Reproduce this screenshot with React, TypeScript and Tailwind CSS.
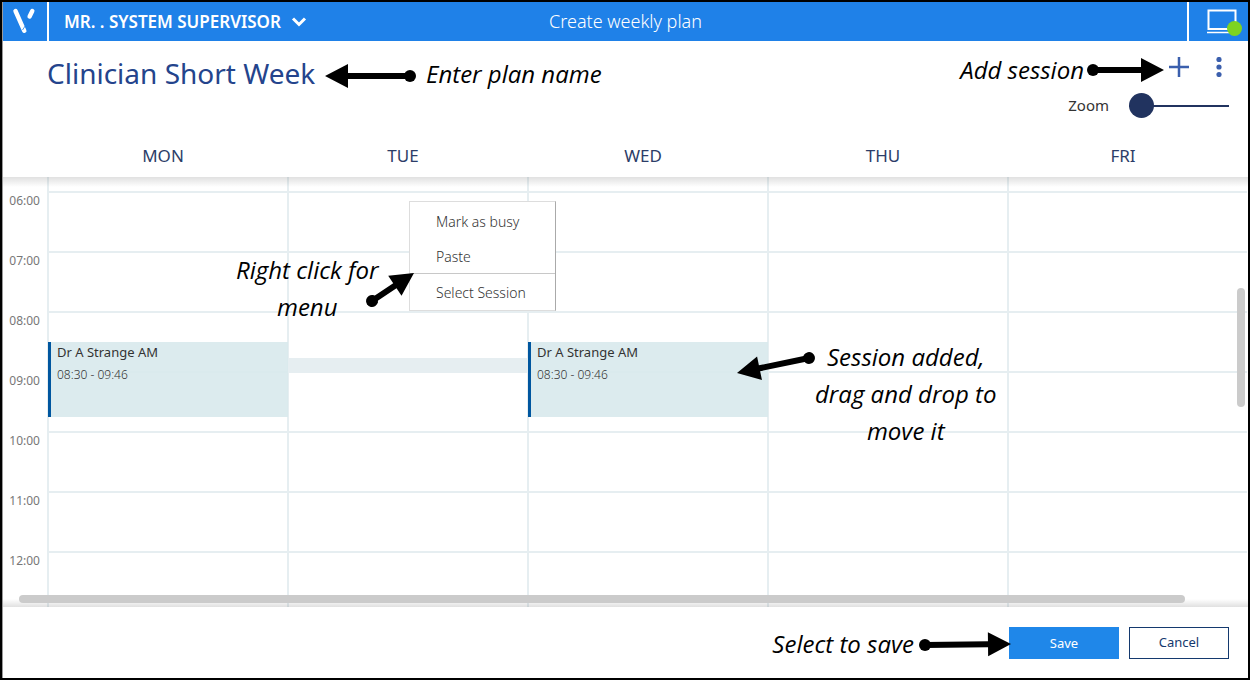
import type { ReactNode } from 'react'

const SANS = "font-['Noto_Sans','Open_Sans',sans-serif]"

const DAYS = ['MON', 'TUE', 'WED', 'THU', 'FRI']
const HOURS = ['06:00', '07:00', '08:00', '09:00', '10:00', '11:00', '12:00']

const FIRST_HOUR = 6
const GRID_OFFSET = 15

interface Session {
  day: string
  name: string
  start: string
  end: string
}

const SESSIONS: Session[] = [
  { day: 'MON', name: 'Dr A Strange AM', start: '08:30', end: '09:46' },
  { day: 'WED', name: 'Dr A Strange AM', start: '08:30', end: '09:46' }
]

// one minute is one pixel at the lowest zoom level
function toOffset(time: string) {
  const [h, m] = time.split(':').map(Number)
  return (h - FIRST_HOUR) * 60 + m + GRID_OFFSET
}

function LogoMark() {
  return (
    <svg viewBox="0 0 44 39" className="h-[39px] w-11" aria-hidden="true">
      <g stroke="#fff" strokeWidth="4.4" strokeLinecap="round">
        <path d="M12.5 9 21.3 28.8" />
        <path d="M29.3 9 26.6 14.5" />
      </g>
      <path d="M19.5 28 22.5 23.5" stroke="#1f81e8" strokeWidth="0.8" />
    </svg>
  )
}

function TopBar() {
  return (
    <header className="flex h-[39px] shrink-0 items-stretch bg-[#1f81e8] text-white">
      <div className="w-11 shrink-0">
        <LogoMark />
      </div>
      <div className="flex flex-1 items-center border-x-2 border-white">
        <div className="flex flex-1 pl-[15px]">
          <button type="button" className="flex items-center gap-2.5 text-[17px] font-semibold whitespace-nowrap">
            MR. . SYSTEM SUPERVISOR
            <svg viewBox="0 0 16 10" className="h-2.5 w-4" fill="none" aria-hidden="true">
              <path d="M2 1.5 8 7.5 14 1.5" stroke="#fff" strokeWidth="3" />
            </svg>
          </button>
        </div>
        <h1 className="text-[18px] font-light whitespace-nowrap">Create weekly plan</h1>
        <div className="flex-1" />
      </div>
      <button type="button" aria-label="Connection status" className="w-[59px] shrink-0">
        <svg viewBox="0 0 59 39" className="h-[39px] w-[59px]" fill="none" aria-hidden="true">
          <path d="M19.5 8.5h27v18.5h-27z" stroke="#fff" strokeWidth="2" />
          <path d="M18 30.5h30" stroke="#fff" strokeWidth="1.5" />
          <circle cx="45.5" cy="26.5" r="7.5" fill="#7ed321" />
        </svg>
      </button>
    </header>
  )
}

function PlanToolbar() {
  return (
    <div className="flex h-[90px] shrink-0 items-start justify-between pr-[19px] pl-11">
      <input
        type="text"
        aria-label="Plan name"
        defaultValue="Clinician Short Week"
        className="mt-3 h-10 w-[280px] bg-transparent text-[28px] text-[#24448c] outline-none"
      />
      <div className="flex flex-col items-end">
        <div className="mt-4 flex items-center gap-5">
          <button type="button" aria-label="Add session">
            <svg viewBox="0 0 20 20" className="size-5" aria-hidden="true">
              <path d="M10 0v20M0 10h20" stroke="#3b5fad" strokeWidth="2.5" />
            </svg>
          </button>
          <button type="button" aria-label="More options">
            <svg viewBox="0 0 20 20" className="size-5" fill="#3b5fad" aria-hidden="true">
              <circle cx="10" cy="2.5" r="2.6" />
              <circle cx="10" cy="10" r="2.6" />
              <circle cx="10" cy="17.5" r="2.6" />
            </svg>
          </button>
        </div>
        <div className="mt-4 flex items-center gap-5">
          <label htmlFor="zoom" className="text-[15px] text-[#333]">
            Zoom
          </label>
          <input
            id="zoom"
            type="range"
            min={0}
            max={10}
            defaultValue={0}
            className="h-[25px] w-[100px] appearance-none bg-transparent [&::-webkit-slider-runnable-track]:h-0.5 [&::-webkit-slider-runnable-track]:bg-[#21335f] [&::-webkit-slider-thumb]:-mt-3 [&::-webkit-slider-thumb]:size-[25px] [&::-webkit-slider-thumb]:appearance-none [&::-webkit-slider-thumb]:rounded-full [&::-webkit-slider-thumb]:bg-[#21335f]"
          />
        </div>
      </div>
    </div>
  )
}

function DayHeader() {
  return (
    <div className="flex h-[46px] shrink-0 pr-px pl-11 text-[17px] text-[#2c3d68]">
      {DAYS.map(day => (
        <div key={day} className="flex flex-1 items-center justify-center pt-1 pr-2">
          {day}
        </div>
      ))}
    </div>
  )
}

function SessionCard({ session }: { session: Session }) {
  const top = toOffset(session.start)
  const height = toOffset(session.end) - top - 1

  return (
    <div
      style={{ top, height }}
      className="absolute -right-px -left-px z-10 border-l-3 border-[#00569f] bg-[#d8e9ec]/90 pl-1.5 text-[#333]"
    >
      <p className="text-[13px] leading-5">{session.name}</p>
      <p className="mt-1 text-[12px] leading-[18px] font-light">
        {session.start} - {session.end}
      </p>
    </div>
  )
}

function ContextMenu() {
  const item = 'block w-full pl-[26px] text-left leading-[35px]'

  return (
    <div
      role="menu"
      className="absolute top-6 left-[120px] z-20 w-[147px] border border-[#ddd] border-r-[#aaa] bg-white text-[14px] font-light text-[#333]"
    >
      <div className="h-[72px] border-b border-[#c8c8c8] pt-0.5">
        <button type="button" role="menuitem" className={item}>
          Mark as busy
        </button>
        <button type="button" role="menuitem" className={item}>
          Paste
        </button>
      </div>
      <button type="button" role="menuitem" className={`${item} pt-px`}>
        Select Session
      </button>
    </div>
  )
}

function DayColumn({ day }: { day: string }) {
  return (
    <div className="relative flex-1 border-l-2 border-[#e6eef1]">
      <div className="h-3.5" />
      {HOURS.map(hour => (
        <div key={hour} className="h-15 border-t-2 border-[#e6eef1]" />
      ))}
      {SESSIONS.filter(s => s.day === day).map(s => (
        <SessionCard key={s.start} session={s} />
      ))}
      {day === 'TUE' && (
        <>
          <div style={{ top: toOffset('08:46') }} className="absolute -right-px -left-px h-[15px] bg-[#e6eef1]" />
          <ContextMenu />
        </>
      )}
    </div>
  )
}

function WeekGrid() {
  return (
    <main className="relative min-h-0 flex-1 overflow-hidden">
      <div className="flex pr-px">
        <div className="w-11 shrink-0 pt-3.5 pr-[7px] text-right text-[12px] leading-[19px] text-[#777]">
          {HOURS.map(hour => (
            <div key={hour} className="h-15">
              {hour}
            </div>
          ))}
        </div>
        {DAYS.map(day => (
          <DayColumn key={day} day={day} />
        ))}
      </div>
      <div className="absolute inset-x-0 top-0 z-10 h-2.5 bg-linear-to-b from-black/12 to-transparent" />
      <div className="absolute inset-x-0 bottom-0 z-10 h-2 bg-linear-to-t from-black/12 to-transparent" />
      <div className="absolute right-[63px] bottom-1 left-4 z-20 h-2 rounded-sm bg-[#cbcbcb]" />
      <div className="absolute top-[111px] right-[3px] z-20 h-[119px] w-2 rounded-sm bg-[#cbcbcb]" />
    </main>
  )
}

function ActionBar() {
  return (
    <footer className="flex h-[71px] shrink-0 items-start justify-end gap-2.5 pt-5 pr-[19px] text-[13px]">
      <button type="button" className="h-8 w-[110px] bg-[#1f87e9] pt-0.5 text-white">
        Save
      </button>
      <button type="button" className="h-8 w-[100px] border border-[#14396e] text-[#14396e]">
        Cancel
      </button>
    </footer>
  )
}

function Note({ className, children }: { className: string; children: ReactNode }) {
  return (
    <p
      className={`absolute z-30 text-center font-['Open_Sans','Noto_Sans',sans-serif] text-[24px] leading-[37px] font-medium whitespace-nowrap text-black italic ${className}`}
    >
      {children}
    </p>
  )
}

interface ArrowProps {
  className: string
  width: number
  height: number
  from: [number, number]
  to: [number, number]
}

function Arrow({ className, width, height, from, to }: ArrowProps) {
  const length = Math.hypot(to[0] - from[0], to[1] - from[1])
  const angle = (Math.atan2(to[1] - from[1], to[0] - from[0]) * 180) / Math.PI

  return (
    <svg width={width} height={height} className={`absolute z-30 ${className}`} aria-hidden="true">
      <g transform={`translate(${from[0]} ${from[1]}) rotate(${angle})`}>
        <circle r="6" />
        <path d={`M0-3H${length - 23}V-12L${length} 0 ${length - 23} 12V3H0z`} />
      </g>
    </svg>
  )
}

export default function App() {
  return (
    <div className={`relative flex h-screen flex-col overflow-hidden border-2 border-black bg-white ${SANS}`}>
      <div className="flex min-h-0 flex-1 flex-col border-l border-[#999]">
        <TopBar />
        <PlanToolbar />
        <DayHeader />
        <WeekGrid />
        <ActionBar />
      </div>

      <Note className="top-[53px] left-[424px]">Enter plan name</Note>
      <Arrow className="top-[58px] left-[318px]" width={100} height={32} from={[90, 16]} to={[5, 16]} />

      <Note className="top-[49px] right-[164px]">Add session</Note>
      <Arrow className="top-[52px] right-[78px]" width={84} height={32} from={[7, 16]} to={[78, 16]} />

      <Note className="top-[249px] left-[234px]">
        Right click for
        <br />
        menu
      </Note>
      <Arrow className="top-[260px] left-[358px]" width={64} height={52} from={[12, 39]} to={[54, 11]} />

      <Note className="top-[336px] left-[813px]">
        Session added,
        <br />
        drag and drop to
        <br />
        move it
      </Note>
      <Arrow className="top-[344px] left-[728px]" width={92} height={40} from={[79, 12]} to={[7, 27]} />

      <Note className="right-[334px] bottom-4">Select to save</Note>
      <Arrow className="right-[232px] bottom-[17px]" width={100} height={32} from={[9, 16]} to={[95, 15]} />
    </div>
  )
}
